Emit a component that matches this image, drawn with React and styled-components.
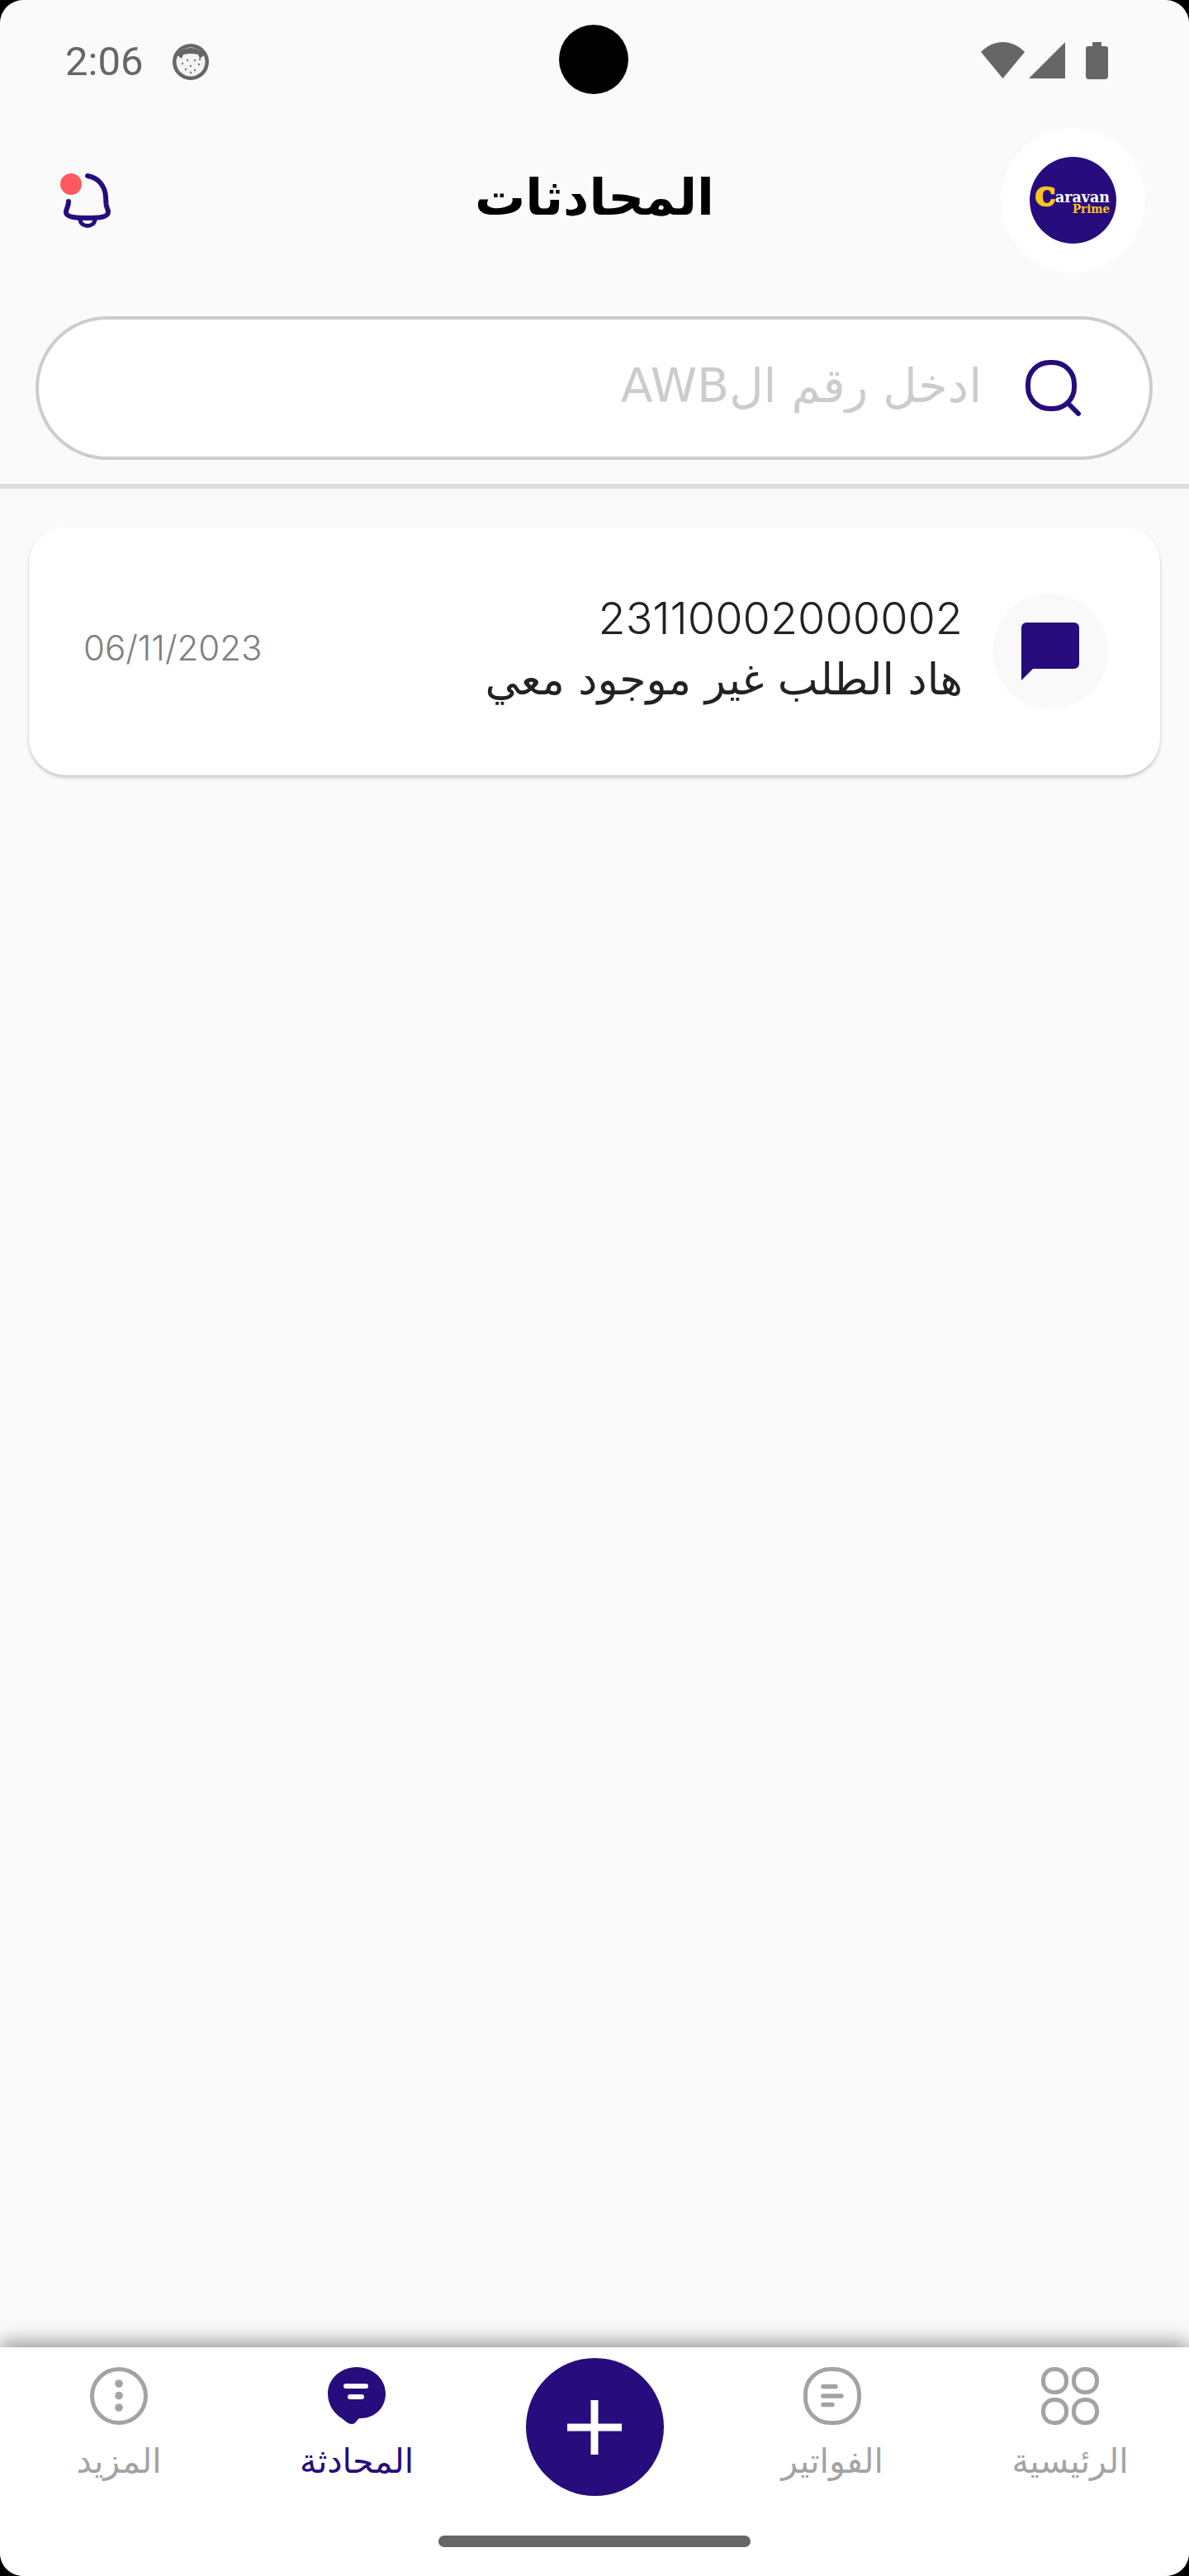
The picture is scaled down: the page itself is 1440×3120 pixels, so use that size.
import React from 'react';
import styled, { createGlobalStyle } from 'styled-components';

const PRIMARY = '#260c7c';
const ARABIC = '"DejaVu Sans", "Noto Sans", sans-serif';

const GlobalStyle = createGlobalStyle`
    html, body {
        margin: 0;
        padding: 0;
        background: #000;
    }
    * {
        box-sizing: border-box;
    }
`;

const App = () => {
    return (
        <Screen dir="rtl">
            <GlobalStyle />
            <StatusBar dir="ltr">
                <StatusLeft>
                    <Clock>2:06</Clock>
                    <FaceIcon />
                </StatusLeft>
                <Camera />
                <StatusRight>
                    <WifiIcon />
                    <SignalIcon />
                    <BatteryIcon />
                </StatusRight>
            </StatusBar>

            <Header>
                <Avatar>
                    <LogoIcon />
                </Avatar>
                <Title>المحادثات</Title>
                <BellButton>
                    <BellIcon />
                    <BellDot />
                </BellButton>
            </Header>

            <SearchBox>
                <SearchIcon />
                <SearchInput placeholder="ادخل رقم الAWB" />
            </SearchBox>
            <Divider />

            <Main>
                <Card>
                    <ChatBadge>
                        <BubbleIcon />
                    </ChatBadge>
                    <CardText>
                        <CardNumber>23110002000002</CardNumber>
                        <CardMessage>هاد الطلب غير موجود معي</CardMessage>
                    </CardText>
                    <CardDate>06/11/2023</CardDate>
                </Card>
            </Main>

            <BottomNav>
                <NavGrid>
                    <NavItem>
                        <HomeIcon />
                        <NavLabel>الرئيسية</NavLabel>
                    </NavItem>
                    <NavItem>
                        <InvoiceIcon />
                        <NavLabel>الفواتير</NavLabel>
                    </NavItem>
                    <AddCell>
                        <AddButton>
                            <PlusIcon />
                        </AddButton>
                    </AddCell>
                    <NavItem>
                        <ChatIcon />
                        <NavLabel $active>المحادثة</NavLabel>
                    </NavItem>
                    <NavItem>
                        <MoreIcon />
                        <NavLabel>المزيد</NavLabel>
                    </NavItem>
                </NavGrid>
                <HomeIndicator />
            </BottomNav>
        </Screen>
    );
};

export default App;

const FaceIcon = () => (
    <svg width="44" height="44" viewBox="0 0 44 44">
        <circle cx="22" cy="22" r="22" fill="#666" />
        <circle cx="22" cy="22" r="17.5" fill="#f4f4f4" />
        <path d="M6 14 C10 2 34 2 38 14 L33 18 L31 13 L24 12 L20 12 L13 13 L11 18 Z" fill="#666" />
        {[[12, 24], [18, 20], [27, 20], [32, 25], [22, 27], [16, 31], [27, 32], [22, 35], [33, 19]].map(([x, y]) => (
            <circle key={x + '-' + y} cx={x} cy={y} r="1.2" fill="#777" />
        ))}
    </svg>
);

const WifiIcon = () => (
    <svg width="53" height="44" viewBox="0 0 53 44">
        <path d="M0 12 C15 -4 38 -4 53 12 L26.5 44 Z" fill="#666" />
    </svg>
);

const SignalIcon = () => (
    <svg width="44" height="44" viewBox="0 0 44 44">
        <path d="M44 0 V44 H0 Z" fill="#666" />
    </svg>
);

const BatteryIcon = () => (
    <svg width="27" height="45" viewBox="0 0 27 45">
        <path d="M8 0 H19 V5 H24 a3 3 0 0 1 3 3 V41 a4 4 0 0 1 -4 4 H4 a4 4 0 0 1 -4 -4 V8 a3 3 0 0 1 3 -3 H8 Z" fill="#666" />
    </svg>
);

const LogoIcon = () => (
    <svg width="105" height="105" viewBox="0 0 105 105">
        <circle cx="52.5" cy="52.5" r="52.5" fill={PRIMARY} />
        <LogoText x="7" y="59" fontSize="30" fill="#fdc521" stroke="#fdc521" strokeWidth="2.5">C</LogoText>
        <LogoText x="31" y="55" fontSize="18" fill="#fff" textLength="66" lengthAdjust="spacingAndGlyphs">aravan</LogoText>
        <LogoText x="52" y="68" fontSize="14" fill="#fdc521" textLength="45" lengthAdjust="spacingAndGlyphs">Prime</LogoText>
    </svg>
);

const BellIcon = () => (
    <svg width="70" height="80" viewBox="0 0 70 80" fill="none" stroke={PRIMARY} strokeLinecap="round">
        <path d="M36 10 C49 12 57 22 58 35 L58.5 44 C59 49 61 50 61 54 C61 60 50 61 36 61 C21 61 10 60 10 54 C10 49 13 48 13 41" strokeWidth="6" />
        <path d="M27 63 C28 73 44 73 45 63" strokeWidth="5" />
    </svg>
);

const SearchIcon = () => (
    <svg width="68" height="68" viewBox="0 0 68 68" fill="none" stroke={PRIMARY} strokeWidth="6" strokeLinecap="round">
        <rect x="3" y="3" width="56" height="56" rx="26" />
        <path d="M52 53 L64 65" />
    </svg>
);

const BubbleIcon = () => (
    <svg width="70" height="70" viewBox="0 0 70 70">
        <path d="M6 0 H64 a6 6 0 0 1 6 6 V50 a6 6 0 0 1 -6 6 H14 L0 70 V6 a6 6 0 0 1 6 -6 Z" fill={PRIMARY} />
    </svg>
);

const HomeIcon = () => (
    <svg width="70" height="70" viewBox="0 0 70 70" fill="none" stroke="#a3a3a3" strokeWidth="5">
        <rect x="2.5" y="2.5" width="28" height="28" rx="13" />
        <rect x="39.5" y="2.5" width="28" height="28" rx="13" />
        <rect x="2.5" y="39.5" width="28" height="28" rx="13" />
        <rect x="39.5" y="39.5" width="28" height="28" rx="13" />
    </svg>
);

const InvoiceIcon = () => (
    <svg width="70" height="70" viewBox="0 0 70 70" fill="none" stroke="#a3a3a3" strokeLinecap="round">
        <rect x="2.5" y="2.5" width="65" height="65" rx="30" strokeWidth="5" />
        <path d="M24 23.5 H39 M24 35 H46 M24 45.5 H35" strokeWidth="5.5" />
    </svg>
);

const ChatIcon = () => (
    <svg width="70" height="70" viewBox="0 0 70 70">
        <path d="M35 0 C54 0 70 14 70 32 C70 50 56 62 40 62 L38 62 C35 64 34 69 29 69 C25 69 22 66 17 62 C7 56 0 45 0 32 C0 14 16 0 35 0 Z" fill={PRIMARY} />
        <path d="M22 23 H46 M27 36 H41" stroke="#fff" strokeWidth="6" strokeLinecap="round" />
    </svg>
);

const MoreIcon = () => (
    <svg width="70" height="70" viewBox="0 0 70 70" fill="#a3a3a3">
        <circle cx="35" cy="35" r="32.5" fill="none" stroke="#a3a3a3" strokeWidth="5" />
        <circle cx="35" cy="20" r="4.8" />
        <circle cx="35" cy="34.5" r="4.8" />
        <circle cx="35" cy="49" r="4.8" />
    </svg>
);

const PlusIcon = () => (
    <svg width="66" height="66" viewBox="0 0 66 66">
        <path d="M33 0 V66 M0 33 H66" stroke="#fff" strokeWidth="9" />
    </svg>
);

const Screen = styled.div`
    position: relative;
    display: flex;
    flex-direction: column;
    width: 1440px;
    height: 3120px;
    overflow: hidden;
    border-radius: 28px;
    background-color: #fafafa;
    font-family: ${ARABIC};
`;

const StatusBar = styled.div`
    position: relative;
    display: flex;
    justify-content: space-between;
    align-items: center;
    flex: 0 0 146px;
    padding: 0 98px 0 79px;
    margin-bottom: 9px;
`;

const StatusLeft = styled.div`
    display: flex;
    align-items: center;
    gap: 36px;
    margin-top: 3px;
`;

const StatusRight = styled.div`
    display: flex;
    align-items: center;
    gap: 5px;
    & > svg:last-child {
        margin-left: 20px;
    }
`;

const Clock = styled.span`
    font-family: Roboto, sans-serif;
    font-size: 49px;
    line-height: 1;
    color: #666;
`;

const Camera = styled.div`
    position: absolute;
    top: 30px;
    left: 677px;
    width: 84px;
    height: 84px;
    border-radius: 50%;
    background-color: #000;
`;

const Header = styled.header`
    display: grid;
    grid-template-columns: 1fr auto 1fr;
    align-items: center;
    padding: 0 53px;
    flex: 0 0 175px;
`;

const Avatar = styled.div`
    display: flex;
    justify-content: center;
    align-items: center;
    width: 175px;
    height: 175px;
    border-radius: 50%;
    background-color: #fff;
`;

const LogoText = styled.text`
    direction: ltr;
    text-anchor: start;
    font-family: "DejaVu Serif", "Liberation Serif", serif;
    font-weight: 700;
`;

const Title = styled.h1`
    margin: -8px 0 0;
    font-size: 61px;
    font-weight: 700;
    line-height: 1.2;
    color: #000;
`;

const BellButton = styled.div`
    position: relative;
    justify-self: end;
    width: 70px;
    height: 80px;
    margin-left: 17px;
`;

const BellDot = styled.span`
    position: absolute;
    top: 7px;
    left: 3px;
    width: 26px;
    height: 26px;
    border-radius: 50%;
    background-color: #ff5a5f;
`;

const SearchBox = styled.div`
    display: flex;
    align-items: center;
    gap: 53px;
    height: 174px;
    margin: 53px 44px 29px 43px;
    padding: 0 82px 0 40px;
    border: 4px solid #ccc;
    border-radius: 87px;
    background-color: #fff;
`;

const SearchInput = styled.input`
    flex: 1;
    min-width: 0;
    padding: 0;
    border: 0;
    outline: 0;
    margin-top: -6px;
    background: transparent;
    font-family: ${ARABIC};
    font-size: 57px;
    color: #333;
    &::placeholder {
        color: #ccc;
        opacity: 1;
    }
`;

const Divider = styled.div`
    flex: 0 0 6px;
    background-color: #ddd;
`;

const Main = styled.main`
    flex: 1;
    padding: 46px 35px 0;
`;

const Card = styled.article`
    display: flex;
    align-items: center;
    gap: 36px;
    height: 301px;
    padding: 0 63px 0 66px;
    border-radius: 45px;
    background-color: #fff;
    box-shadow: 0 3px 4px rgba(0, 0, 0, 0.2);
`;

const ChatBadge = styled.div`
    display: flex;
    justify-content: center;
    align-items: center;
    flex: 0 0 140px;
    height: 140px;
    border-radius: 50%;
    background-color: #f9f9f9;
`;

const CardText = styled.div`
    display: flex;
    flex-direction: column;
    gap: 8px;
`;

const CardNumber = styled.div`
    font-family: Inter, sans-serif;
    font-size: 54px;
    font-weight: 300;
    line-height: 60px;
    color: #222;
`;

const CardMessage = styled.div`
    font-size: 52px;
    line-height: 72px;
    color: #222;
`;

const CardDate = styled.div`
    margin-right: auto;
    margin-bottom: 8px;
    font-family: Inter, sans-serif;
    font-size: 42px;
    font-weight: 300;
    color: #808080;
`;

const BottomNav = styled.nav`
    flex: 0 0 277px;
    padding-top: 13px;
    background-color: #fff;
    box-shadow: 0 -6px 22px rgba(0, 0, 0, 0.4);
`;

const NavGrid = styled.div`
    display: grid;
    grid-template-columns: repeat(5, 1fr);
    align-items: start;
    height: 167px;
`;

const NavItem = styled.div`
    display: flex;
    flex-direction: column;
    align-items: center;
    gap: 20px;
    padding-top: 11px;
`;

const NavLabel = styled.span`
    font-size: 41px;
    line-height: 48px;
    color: ${props => (props.$active ? PRIMARY : '#a3a3a3')};
`;

const AddCell = styled.div`
    display: flex;
    justify-content: center;
`;

const AddButton = styled.div`
    display: flex;
    justify-content: center;
    align-items: center;
    width: 167px;
    height: 167px;
    border-radius: 50%;
    background-color: ${PRIMARY};
`;

const HomeIndicator = styled.div`
    width: 378px;
    height: 14px;
    margin: 48px auto 0;
    border-radius: 7px;
    background-color: #666;
`;
